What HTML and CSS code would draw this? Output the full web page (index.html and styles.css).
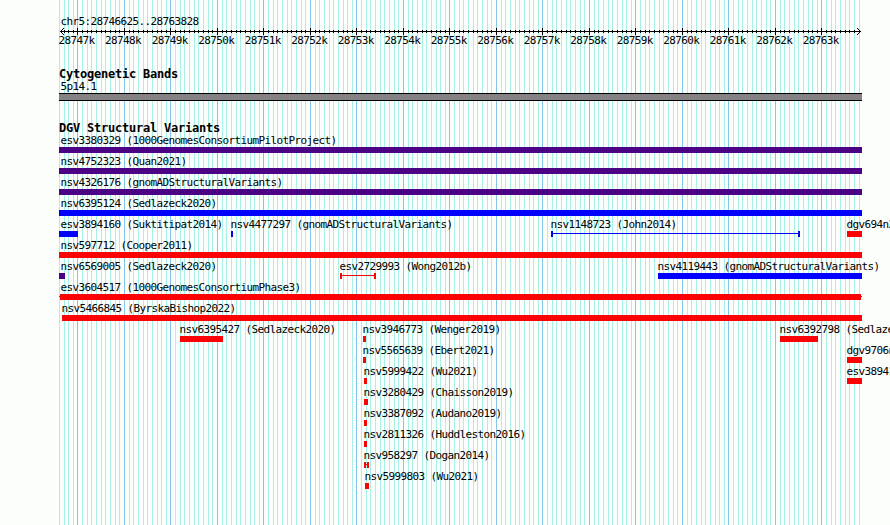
FILE: index.html
```html
<!DOCTYPE html>
<html lang="en">
<head>
<meta charset="utf-8">
<title>chr5:28746625..28763828</title>
<link rel="stylesheet" href="styles.css">
</head>
<body>
<main class="browser">
  <svg class="gridlines" id="gridlines" width="890" height="525" shape-rendering="crispEdges"></svg>
  <header class="ruler">
    <div class="label region">chr5:28746625..28763828</div>
    <svg class="scale" id="scale" width="890" height="7" shape-rendering="crispEdges"></svg>
    <div class="label ticks" id="ticks"></div>
  </header>
  <section class="track cytoband">
    <h2>Cytogenetic Bands</h2>
    <div class="label band-name">5p14.1</div>
    <div class="band"></div>
  </section>
  <section class="track variants">
    <h2>DGV Structural Variants</h2>
    <div id="rows"></div>
  </section>
</main>
<script src="tracks.js"></script>
</body>
</html>
```
FILE: styles.css
```css
body {
  margin: 0;
  background: #fcfefc;
}

.browser {
  position: relative;
  width: 890px;
  height: 525px;
  overflow: hidden;
  color: #000;
}

.gridlines {
  position: absolute;
  inset: 0;
}

.minor { fill: #a8f0e8; }
.major { fill: #84c6ec; }
.axis { fill: #000; }

.ruler,
.track {
  position: relative;
}

.ruler {
  padding-top: 15px;
  height: 53px;
}

.label {
  font: 11px/13px "DejaVu Sans Mono", monospace;
  letter-spacing: -0.622px;
  white-space: pre;
}

.region { padding-left: 60.5px; }

.scale { display: block; }

.ticks {
  display: flex;
  gap: 10.5px;
  margin-top: -1px;
  padding-left: 58.6px;
}

.ticks span { flex: 0 0 36px; }

h2 {
  margin: 0;
  padding-left: 59px;
  font: bold 12px/13px "DejaVu Sans Mono", monospace;
  letter-spacing: -0.224px;
}

.cytoband { height: 54px; }

.band-name {
  margin-top: -1px;
  padding-left: 60.5px;
}

.band {
  box-sizing: border-box;
  width: 803px;
  height: 8px;
  margin-left: 59px;
  background: #848284;
  border: solid #000;
  border-width: 1px 0;
}

.row {
  display: grid;
  height: 21px;
}

.variants .row:first-child { margin-top: -1px; }

.feature {
  grid-area: 1 / 1;
  display: flex;
  flex-direction: column;
}

.feature .label { margin-left: var(--label); }

.bar {
  box-sizing: border-box;
  width: var(--width);
  height: 6px;
  margin-left: var(--start);
  background: var(--color);
}

.bar.span {
  background: linear-gradient(var(--color), var(--color)) 0 2px / 100% 1px no-repeat;
  border: solid var(--color);
  border-width: 0 2px;
}

.bar.stubs {
  background:
    linear-gradient(var(--color), var(--color)) 0 2px / 100% 1px no-repeat,
    linear-gradient(var(--color), var(--color)) 1px 0 / calc(100% - 2px) 100% no-repeat;
}

.gain { --color: #0000fc; }
.loss { --color: #fc0204; }
.both { --color: #4c0284; }
```
FILE: tracks.js
```js
const ORIGIN = 77.45;
const KB = 46.5;
const rect = (x, y, w, h, cls) =>
  `<rect class="${cls}" x="${x}" y="${y}" width="${w}" height="${h}"/>`;

let grid = "";
let axis = rect(60, 3, 801, 1, "axis");
for (let i = -4; i <= 168; i++) {
  const major = i % 10 === 0;
  const x = Math.round(ORIGIN + i * KB / 10);
  grid += rect(x, 0, 1, 525, major ? "major" : "minor");
  if (i > -4) axis += major ? rect(x, 0, 1, 7, "axis") : rect(x, 2, 1, 3, "axis");
}
// Open arrowheads at both ends of the scale
for (let d = 1; d <= 3; d++) {
  axis += rect(60 + d, 3 - d, 1, 1, "axis") + rect(60 + d, 3 + d, 1, 1, "axis");
  axis += rect(860 - d, 3 - d, 1, 1, "axis") + rect(860 - d, 3 + d, 1, 1, "axis");
}
document.getElementById("gridlines").innerHTML = grid;
document.getElementById("scale").innerHTML = axis;

let ticks = "";
for (let k = 28747; k <= 28763; k++) ticks += `<span>${k}k</span>`;
document.getElementById("ticks").innerHTML = ticks;

// [name, start, end, type, shape]
const rows = [
  [["esv3380329 (1000GenomesConsortiumPilotProject)", 59, 862, "both"]],
  [["nsv4752323 (Quan2021)", 59, 862, "both"]],
  [["nsv4326176 (gnomADStructuralVariants)", 59, 862, "both"]],
  [["nsv6395124 (Sedlazeck2020)", 59, 862, "gain"]],
  [["esv3894160 (Suktitipat2014)", 59, 78, "gain"],
   ["nsv4477297 (gnomADStructuralVariants)", 231, 233, "gain"],
   ["nsv1148723 (John2014)", 551, 800, "gain", "span"],
   ["dgv694n21", 847, 862, "loss"]],
  [["nsv597712 (Cooper2011)", 59, 862, "loss"]],
  [["nsv6569005 (Sedlazeck2020)", 59, 65, "both"],
   ["esv2729993 (Wong2012b)", 340, 376, "loss", "span"],
   ["nsv4119443 (gnomADStructuralVariants)", 658, 862, "gain"]],
  [["esv3604517 (1000GenomesConsortiumPhase3)", 59, 862, "loss", "stubs"]],
  [["nsv5466845 (ByrskaBishop2022)", 62, 862, "loss"]],
  [["nsv6395427 (Sedlazeck2020)", 180, 223, "loss"],
   ["nsv3946773 (Wenger2019)", 363, 366, "loss"],
   ["nsv6392798 (Sedlazeck2020)", 780, 818, "loss"]],
  [["nsv5565639 (Ebert2021)", 363, 366, "loss"],
   ["dgv9706n54", 847, 862, "loss"]],
  [["nsv5999422 (Wu2021)", 364, 367, "loss"],
   ["esv3894161", 847, 862, "loss"]],
  [["nsv3280429 (Chaisson2019)", 364, 368, "loss"]],
  [["nsv3387092 (Audano2019)", 364, 367, "loss"]],
  [["nsv2811326 (Huddleston2016)", 364, 367, "loss"]],
  [["nsv958297 (Dogan2014)", 364, 369, "loss", "span"]],
  [["nsv5999803 (Wu2021)", 365, 369, "loss"]]
];

document.getElementById("rows").innerHTML = rows.map(row =>
  `<div class="row">${row.map(([name, start, end, type, shape = ""]) => {
    const label = Math.max(start - 1, 60) + 0.5;
    return `<div class="feature ${type}" style="--start:${start}px;--width:${end - start}px;--label:${label}px">` +
      `<div class="label">${name}</div><div class="bar ${shape}"></div></div>`;
  }).join("")}</div>`).join("");
```
